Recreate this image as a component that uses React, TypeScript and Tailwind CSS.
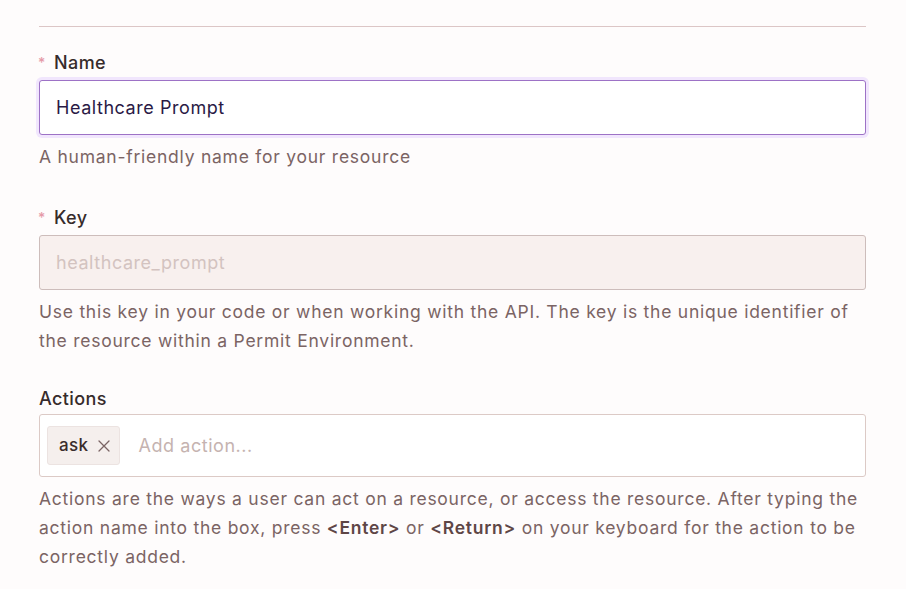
import React from 'react';

const Label: React.FC<{ text: string; required?: boolean; className?: string }> = ({ text, required, className }) => (
  <div className={`flex items-center h-7 text-[18px] font-medium tracking-[0.4px] text-[#362b2b] ${className ?? ''}`}>
    {required && <span className="text-[#e59aa8] text-[14px] w-4 -ml-px">*</span>}
    <span>{text}</span>
  </div>
);

const Help: React.FC<{ children: React.ReactNode; className?: string }> = ({ children, className }) => (
  <p className={`text-[17.5px] leading-[29px] text-[#7b6464] tracking-[0.75px] ${className ?? ''}`}>{children}</p>
);

export default function App() {
  return (
    <div
      className="min-h-[589px] w-[906px] bg-[#fefcfc] px-[39px] pt-[26px]"
      style={{ fontFamily: 'Inter, "Noto Sans", sans-serif' }}
    >
      <div className="h-px bg-[#dcc6c6] w-[827px]" />

      <Label text="Name" required className="mt-[21px]" />
      <div className="mt-1 h-[55px] w-[827px] rounded-[3px] border border-[#9d72c6] bg-white shadow-[0_0_0_3px_#f1e6fd] flex items-center pl-4 text-[18px] tracking-[0.55px] text-[#2a1a45]">
        Healthcare Prompt
      </div>
      <Help className="mt-[7px]">A human-friendly name for your resource</Help>

      <Label text="Key" required className="mt-8" />
      <div className="mt-1 h-[55px] w-[827px] rounded-[3px] border border-[#cdbdbb] bg-[#f8f0ee] flex items-center pl-4 text-[18px] tracking-[0.55px] text-[#d3c3c0]">
        healthcare_prompt
      </div>
      <Help className="mt-[7px]">
        Use this key in your code or when working with the API. The key is the unique identifier of the resource within a Permit Environment.
      </Help>

      <Label text="Actions" className="mt-[29px]" />
      <div className="mt-0.5 h-[63px] w-[827px] rounded-[3px] border border-[#dccac6] bg-white flex items-center pl-[7px] gap-[19px]">
        <div className="h-[39px] flex items-center gap-[9px] pl-[11px] pr-[9px] rounded-[3px] border border-[#ece3e1] bg-[#f5efed] text-[17px] font-medium tracking-[0.4px] text-[#3a2c2c]">
          <span>ask</span>
          <svg width="12" height="12" viewBox="0 0 12 12" className="text-[#7b6464]">
            <path d="M1 1 L11 11 M11 1 L1 11" stroke="currentColor" strokeWidth="1.3" strokeLinecap="round" />
          </svg>
        </div>
        <span className="text-[18px] tracking-[0.55px] text-[#c5b3b0]">Add action...</span>
      </div>
      <Help className="mt-[7px]">
        Actions are the ways a user can act on a resource, or access the resource. After typing the action name into the box, press{' '}
        <b className="font-semibold text-[#5e4646]">&lt;Enter&gt;</b> or <b className="font-semibold text-[#5e4646]">&lt;Return&gt;</b> on your
        keyboard for the action to be correctly added.
      </Help>
    </div>
  );
}
